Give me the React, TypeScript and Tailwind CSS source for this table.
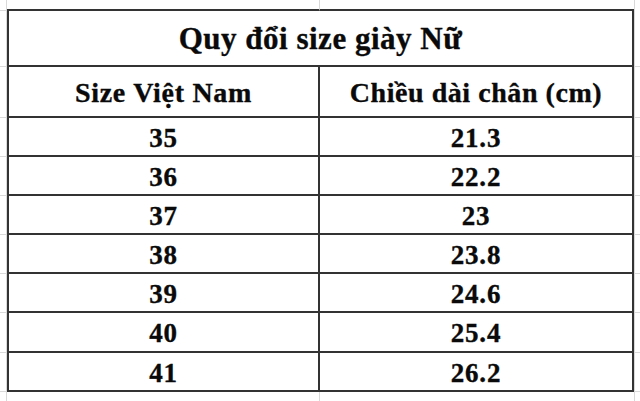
import React from "react";

const rows: [string, string][] = [
  ["35", "21.3"],
  ["36", "22.2"],
  ["37", "23"],
  ["38", "23.8"],
  ["39", "24.6"],
  ["40", "25.4"],
  ["41", "26.2"],
];
const heights = ["h-[39px]", "h-[39px]", "h-[39px]", "h-[39px]", "h-[39px]", "h-[40px]", "h-[39px]"];

const font = { fontFamily: '"Liberation Serif", "Times New Roman", serif' };

export default function App() {
  return (
    <div
      className="w-[640px] h-[401px] bg-white overflow-hidden text-[#0a0a0a] [-webkit-text-stroke:0.35px_#0a0a0a]"
      style={font}
    >
      {/* top margin row */}
      <div className="flex h-[11px]">
        <div className="w-[7px] border-r border-b border-[#d9d9d9]" />
        <div className="w-[313px] border-b-2 border-b-[#333] border-r border-r-[#d9d9d9]" />
        <div className="w-[314px] border-b-2 border-b-[#333]" />
        <div className="flex-1 border-l border-[#d9d9d9]" />
      </div>
      {/* title row */}
      <div className="flex h-[56px]">
        <div className="w-[7px] border-r border-b border-[#d9d9d9]" />
        <div className="w-[627px] border-x-2 border-b-2 border-[#333] flex items-center justify-center pt-[2px] text-[31px] font-bold tracking-[0.5px]">
          Quy đổi size giày Nữ
        </div>
        <div className="flex-1 border-l border-b border-[#d9d9d9]" />
      </div>
      {/* header row */}
      <div className="flex h-[51px]">
        <div className="w-[7px] border-r border-b border-[#d9d9d9]" />
        <div className="w-[313px] border-x-2 border-b-2 border-[#333] flex items-center justify-center pt-[2px] text-[28px] font-bold tracking-[0.7px]">
          Size Việt Nam
        </div>
        <div className="w-[314px] border-r-2 border-b-2 border-[#333] flex items-center justify-center pt-[2px] text-[28px] font-bold tracking-[0.55px]">
          Chiều dài chân (cm)
        </div>
        <div className="flex-1 border-l border-b border-[#d9d9d9]" />
      </div>
      {rows.map(([a, b], i) => (
        <div key={a} className={`flex ${heights[i]}`}>
          <div className="w-[7px] border-r border-b border-[#d9d9d9]" />
          <div className="w-[313px] border-x-2 border-b-2 border-[#333] flex items-center justify-center pt-[3px] text-[27px] font-bold tracking-[0.8px]">
            {a}
          </div>
          <div className="w-[314px] border-r-2 border-b-2 border-[#333] flex items-center justify-center pt-[3px] text-[27px] font-bold tracking-[0.8px]">
            {b}
          </div>
          <div className="flex-1 border-l border-b border-[#d9d9d9]" />
        </div>
      ))}
      {/* bottom margin row */}
      <div className="flex h-[20px]">
        <div className="w-[7px] border-r border-[#d9d9d9]" />
        <div className="w-[313px] border-r border-[#d9d9d9]" />
        <div className="w-[314px]" />
        <div className="flex-1 border-l border-[#d9d9d9]" />
      </div>
    </div>
  );
}
